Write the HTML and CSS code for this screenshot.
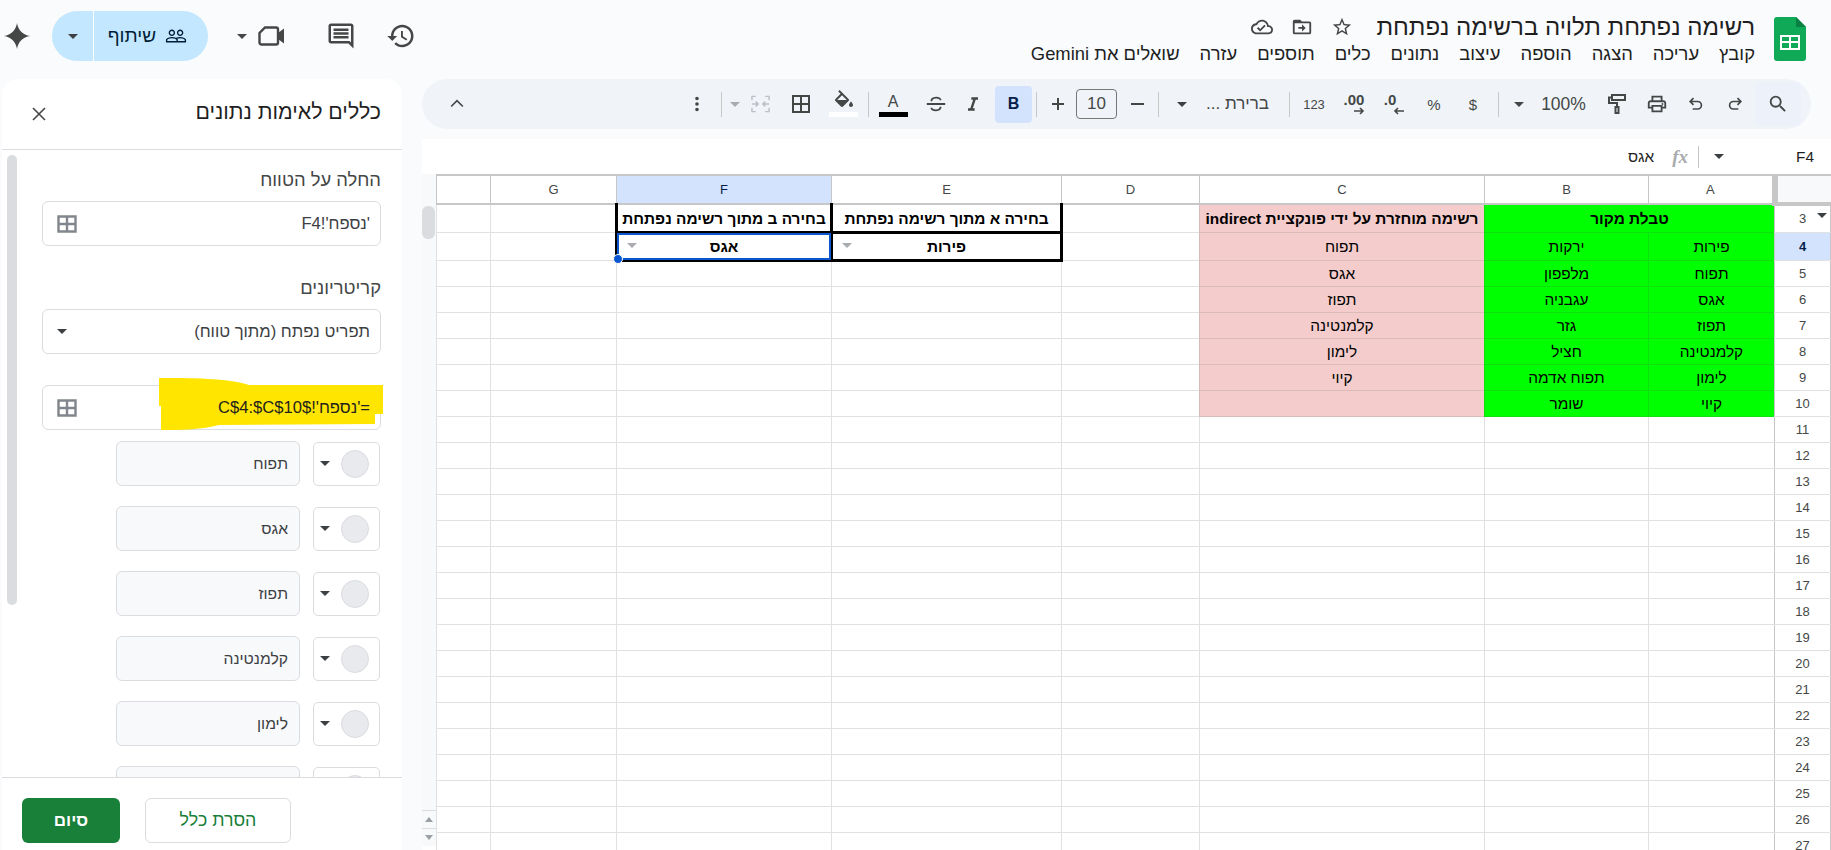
FILE: index.html
```html
<!DOCTYPE html>
<html lang="he" dir="rtl">
<head>
<meta charset="utf-8">
<title>רשימה נפתחת תלויה ברשימה נפתחת</title>
<link rel="stylesheet" href="styles.css">
</head>
<body>
<header class="top">
  <svg class="logo" viewBox="0 0 32 44"><path d="M3 0H22L32 10V41a3 3 0 0 1-3 3H3a3 3 0 0 1-3-3V3a3 3 0 0 1 3-3z" fill="#0fa958"/><path d="M22 0l10 10H22z" fill="#0b8043"/><path d="M6 18h20v15H6z" fill="#fff"/><path d="M8 20h7v4H8zM17 20h7v4h-7zM8 26h7v5H8zM17 26h7v5h-7z" fill="#0fa958"/></svg>
  <div class="doc">
    <div class="doc-title">
      <span class="title-text">רשימה נפתחת תלויה ברשימה נפתחת</span>
      <svg class="ic22 star" viewBox="0 0 24 24"><path d="M22 9.24l-7.19-.62L12 2 9.19 8.63 2 9.24l5.46 4.73L5.82 21 12 17.27 18.18 21l-1.63-7.03L22 9.24zM12 15.4l-3.76 2.27 1-4.28-3.32-2.88 4.38-.38L12 6.1l1.71 4.04 4.38.38-3.32 2.88 1 4.28L12 15.4z"/></svg>
      <svg class="ic22 folder" viewBox="0 0 24 24"><path d="M20 6h-8l-2-2H4c-1.1 0-2 .9-2 2v12c0 1.1.9 2 2 2h16c1.1 0 2-.9 2-2V8c0-1.1-.9-2-2-2zm0 12H4V8h16v10zm-8-1v-3H8v-2h4V9l4 4-4 4z"/></svg>
      <svg class="ic22 cloud" viewBox="0 0 24 24"><path d="M19.35 10.04C18.67 6.59 15.64 4 12 4 9.11 4 6.6 5.64 5.35 8.04 2.34 8.36 0 10.91 0 14c0 3.31 2.69 6 6 6h13c2.76 0 5-2.24 5-5 0-2.64-2.05-4.78-4.65-4.96zM19 18H6c-2.21 0-4-1.79-4-4 0-2.05 1.53-3.76 3.56-3.97l1.07-.11.5-.95C8.08 7.14 9.94 6 12 6c2.62 0 4.88 1.86 5.39 4.43l.3 1.5 1.53.11c1.56.1 2.78 1.41 2.78 2.96 0 1.65-1.35 3-3 3zm-9-1l-3.5-3.5 1.41-1.41L10 14.18l4.6-4.6 1.41 1.41z"/></svg>
    </div>
    <nav class="menu">
      <span>קובץ</span><span>עריכה</span><span>הצגה</span><span>הוספה</span><span>עיצוב</span><span>נתונים</span><span>כלים</span><span>תוספים</span><span>עזרה</span><span>שואלים את Gemini</span>
    </nav>
  </div>
  <div class="actions">
    <svg class="ic28 a-history" viewBox="0 0 24 24"><path d="M13 3c-4.97 0-9 4.03-9 9H1l3.89 3.89.07.14L9 12H6c0-3.87 3.13-7 7-7s7 3.13 7 7-3.13 7-7 7c-1.93 0-3.68-.79-4.94-2.06l-1.42 1.42C8.27 19.99 10.51 21 13 21c4.97 0 9-4.03 9-9s-4.03-9-9-9zm-1 5v5l4.28 2.54.72-1.21-3.5-2.08V8H12z"/></svg>
    <svg class="ic28 a-comment" viewBox="0 0 24 24"><path d="M21.99 4c0-1.1-.89-2-1.99-2H4c-1.1 0-2 .9-2 2v12c0 1.1.9 2 2 2h14l4 4-.01-18zM20 4v13.17L18.83 16H4V4h16zM6 12h12v2H6zm0-3h12v2H6zm0-3h12v2H6z"/></svg>
    <svg class="a-video" viewBox="0 0 27 22"><path d="M7 2.5h11a2 2 0 0 1 2 2v13a2 2 0 0 1-2 2H3.5a2 2 0 0 1-2-2V8z" fill="none" stroke="#444746" stroke-width="2.4"/><path d="M20 8l6-4.5v15L20 14z" fill="#444746"/></svg>
    <span class="caret a-caret"></span>
    <div class="share">
      <div class="share-main">
        <svg class="ic22 people" viewBox="0 0 24 24"><path d="M16.5 13c-1.2 0-3.07.34-4.5 1-1.43-.67-3.3-1-4.5-1C5.33 13 1 14.08 1 16.25V19h22v-2.75c0-2.17-4.33-3.25-6.5-3.25zm-4 4.5h-10v-1.25c0-.54 2.56-1.75 5-1.75s5 1.21 5 1.75v1.25zm9 0H14v-1.25c0-.46-.2-.86-.52-1.22.88-.3 1.96-.53 3.02-.53 2.44 0 5 1.21 5 1.75v1.25zM7.5 12c1.93 0 3.5-1.57 3.5-3.5S9.43 5 7.5 5 4 6.57 4 8.5 5.57 12 7.5 12zm0-5.5c1.1 0 2 .9 2 2s-.9 2-2 2-2-.9-2-2 .9-2 2-2zm9 5.5c1.93 0 3.5-1.57 3.5-3.5S18.43 5 16.5 5 13 6.57 13 8.5s1.57 3.5 3.5 3.5zm0-5.5c1.1 0 2 .9 2 2s-.9 2-2 2-2-.9-2-2 .9-2 2-2z"/></svg>
        <span class="share-text">שיתוף</span>
      </div>
      <div class="share-drop"><span class="caret dark"></span></div>
    </div>
    <svg class="gem" viewBox="0 0 26 26"><path d="M13 0C14 7 19 12 26 13 19 14 14 19 13 26 12 19 7 14 0 13 7 12 12 7 13 0z"/></svg>
  </div>
</header>

<div class="work">
  <main class="main">
    <div class="toolbar">
      <div class="tool w46 hover"><svg class="ic24" viewBox="0 0 24 24"><path d="M15.5 14h-.79l-.28-.27A6.471 6.471 0 0 0 16 9.5 6.5 6.5 0 1 0 9.5 16c1.61 0 3.09-.59 4.23-1.57l.27.28v.79l5 4.99L20.49 19l-4.99-5zm-6 0C7.01 14 5 11.99 5 9.5S7.01 5 9.5 5 14 7.01 14 9.5 11.99 14 9.5 14z"/></svg></div>
      <div class="tool w40"><svg class="st20" viewBox="0 0 24 24"><path d="M15 5l4 4-4 4M19 9H10a4.5 4.5 0 0 0 0 9h6"/></svg></div>
      <div class="tool w38"><svg class="st20" viewBox="0 0 24 24"><path d="M9 5L5 9l4 4M5 9h9a4.5 4.5 0 0 1 0 9H8"/></svg></div>
      <div class="tool w40"><svg class="ic24" viewBox="0 0 24 24"><path d="M19 8h-1V3H6v5H5c-1.66 0-3 1.34-3 3v6h4v4h12v-4h4v-6c0-1.66-1.34-3-3-3zM8 5h8v3H8V5zm8 12v2H8v-4h8v2zm2-2v-2H6v2H4v-4c0-.55.45-1 1-1h14c.55 0 1 .45 1 1v4h-2z"/><circle cx="18" cy="12" r="1"/></svg></div>
      <div class="tool w40"><svg class="st24" viewBox="0 0 24 24"><path d="M7 3h13v5H7zM7 5.5H4V11h8v4M10.5 15h3v6h-3z"/></svg></div>
      <div class="tool w67 txt14b">100%</div>
      <div class="tool w22"><span class="caret"></span></div>
      <div class="tool w20"><span class="sep"></span></div>
      <div class="tool w30 txt14">$</div>
      <div class="tool w48 txt14">%</div>
      <div class="tool w34 dec d1"><span class="dec-num">.0</span><svg class="dec-arrow" viewBox="0 0 12 8"><path d="M11 4H2M5 1L2 4l3 3"/></svg></div>
      <div class="tool w44 dec d2"><span class="dec-num">.00</span><svg class="dec-arrow" viewBox="0 0 12 8"><path d="M1 4h9M7 1l3 3-3 3"/></svg></div>
      <div class="tool w36 txt12">123</div>
      <div class="tool w14"><span class="sep"></span></div>
      <div class="tool w88 font-name"><span>ברירת ...</span></div>
      <div class="tool w24"><span class="caret dark"></span></div>
      <div class="tool w24"><span class="sep"></span></div>
      <div class="tool w18"><span class="minus"></span></div>
      <div class="size-box">10</div>
      <div class="tool w36"><svg class="plus" viewBox="0 0 14 14"><path d="M7 1v12M1 7h12"/></svg></div>
      <div class="tool w8"><span class="sep"></span></div>
      <div class="tool w37 bold-btn">B</div>
      <div class="tool w44"><svg class="ic20" viewBox="0 0 24 24"><path d="M10 4v3h2.21l-3.42 10H6v3h8v-3h-2.21l3.42-10H18V4z"/></svg></div>
      <div class="tool w30 gap13"><svg class="st22" viewBox="0 0 24 24"><path d="M2 12h20M7 9c0-5 10-5 10-1M17 15c0 5-10 5-10 1"/></svg></div>
      <div class="tool w30 colour"><span class="colour-a">A</span><span class="bar black"></span></div>
      <div class="tool w20"><span class="sep"></span></div>
      <div class="tool w30 colour"><svg class="fill-ic" viewBox="0 0 22 18"><path d="M16.56 8.94L7.62 0 6.21 1.41l2.38 2.38-5.15 5.15c-.59.59-.59 1.54 0 2.12l5.5 5.5c.29.29.68.44 1.06.44s.77-.15 1.06-.44l5.5-5.5c.59-.58.59-1.53 0-2.12zM5.21 10L10 5.21 14.79 10H5.21zM19 11.5s-2 2.17-2 3.5c0 1.1.9 2 2 2s2-.9 2-2c0-1.33-2-3.5-2-3.5z"/></svg><span class="bar white"></span></div>
      <div class="tool w54"><svg class="borders" viewBox="0 0 18 18"><path d="M1 1h16v16H1zM9 1v16M1 9h16"/></svg></div>
      <div class="tool w28"><svg class="merge" viewBox="0 0 20 18"><path d="M1 5V1h4M19 5V1h-4M1 13v4h4M19 13v4h-4M1 9h6M5 6.5L7.5 9 5 11.5M19 9h-6M15 6.5L12.5 9l2.500 2.500"/></svg></div>
      <div class="tool w22"><span class="caret light"></span></div>
      <div class="tool w6"><span class="sep"></span></div>
      <div class="tool w42"><svg class="ic24" viewBox="0 0 24 24"><path d="M12 8a2 2 0 1 0 0-4 2 2 0 0 0 0 4zm0 2a2 2 0 1 0 0 4 2 2 0 0 0 0-4zm0 6a2 2 0 1 0 0 4 2 2 0 0 0 0-4z"/></svg></div>
      <div class="tool w40 push-end"><svg class="st20" viewBox="0 0 24 24"><path d="M5 15l7-7 7 7"/></svg></div>
    </div>

    <section class="sheet">
      <div class="formula">
        <span class="cell-ref">F4</span>
        <span class="caret dark fcaret"></span>
        <span class="fsep"></span>
        <span class="fx">fx</span>
        <span class="fvalue">אגס</span>
      </div>
      <div class="grid-wrap">
        <table class="grid">
          <colgroup><col class="c-row"><col class="c-a"><col class="c-b"><col class="c-c"><col class="c-d"><col class="c-e"><col class="c-f"><col class="c-g"><col class="c-h"></colgroup>
          <tr class="r-head"><th class="corner"></th><th>A</th><th>B</th><th>C</th><th>D</th><th>E</th><th class="on">F</th><th>G</th><th></th></tr>
          <tr class="r-28"><th class="rn">3<span class="caret dark freeze"></span></th><td class="g b" colspan="2">טבלת מקור</td><td class="p b">רשימה מוחזרת על ידי פונקציית indirect</td><td></td><td class="k open b">בחירה א מתוך רשימה נפתחת</td><td class="k open b">בחירה ב מתוך רשימה נפתחת</td><td></td><td></td></tr>
          <tr class="r-28"><th class="rn on">4</th><td class="g">פירות</td><td class="g">ירקות</td><td class="p">תפוח</td><td></td><td class="k b cell"><span class="caret light chip"></span>פירות</td><td class="k b cell"><span class="caret light chip"></span>אגס<span class="sel"><i class="handle"></i></span></td><td></td><td></td></tr>
          <tr><th class="rn">5</th><td class="g">תפוח</td><td class="g">מלפפון</td><td class="p">אגס</td><td></td><td></td><td></td><td></td><td></td></tr>
          <tr><th class="rn">6</th><td class="g">אגס</td><td class="g">עגבניה</td><td class="p">תפוז</td><td></td><td></td><td></td><td></td><td></td></tr>
          <tr><th class="rn">7</th><td class="g">תפוז</td><td class="g">גזר</td><td class="p">קלמנטינה</td><td></td><td></td><td></td><td></td><td></td></tr>
          <tr><th class="rn">8</th><td class="g">קלמנטינה</td><td class="g">חציל</td><td class="p">לימון</td><td></td><td></td><td></td><td></td><td></td></tr>
          <tr><th class="rn">9</th><td class="g">לימון</td><td class="g">תפוח אדמה</td><td class="p">קיוי</td><td></td><td></td><td></td><td></td><td></td></tr>
          <tr><th class="rn">10</th><td class="g">קיוי</td><td class="g">שומר</td><td class="p"></td><td></td><td></td><td></td><td></td><td></td></tr>
          <tr><th class="rn">11</th><td></td><td></td><td></td><td></td><td></td><td></td><td></td><td></td></tr>
          <tr><th class="rn">12</th><td></td><td></td><td></td><td></td><td></td><td></td><td></td><td></td></tr>
          <tr><th class="rn">13</th><td></td><td></td><td></td><td></td><td></td><td></td><td></td><td></td></tr>
          <tr><th class="rn">14</th><td></td><td></td><td></td><td></td><td></td><td></td><td></td><td></td></tr>
          <tr><th class="rn">15</th><td></td><td></td><td></td><td></td><td></td><td></td><td></td><td></td></tr>
          <tr><th class="rn">16</th><td></td><td></td><td></td><td></td><td></td><td></td><td></td><td></td></tr>
          <tr><th class="rn">17</th><td></td><td></td><td></td><td></td><td></td><td></td><td></td><td></td></tr>
          <tr><th class="rn">18</th><td></td><td></td><td></td><td></td><td></td><td></td><td></td><td></td></tr>
          <tr><th class="rn">19</th><td></td><td></td><td></td><td></td><td></td><td></td><td></td><td></td></tr>
          <tr><th class="rn">20</th><td></td><td></td><td></td><td></td><td></td><td></td><td></td><td></td></tr>
          <tr><th class="rn">21</th><td></td><td></td><td></td><td></td><td></td><td></td><td></td><td></td></tr>
          <tr><th class="rn">22</th><td></td><td></td><td></td><td></td><td></td><td></td><td></td><td></td></tr>
          <tr><th class="rn">23</th><td></td><td></td><td></td><td></td><td></td><td></td><td></td><td></td></tr>
          <tr><th class="rn">24</th><td></td><td></td><td></td><td></td><td></td><td></td><td></td><td></td></tr>
          <tr><th class="rn">25</th><td></td><td></td><td></td><td></td><td></td><td></td><td></td><td></td></tr>
          <tr><th class="rn">26</th><td></td><td></td><td></td><td></td><td></td><td></td><td></td><td></td></tr>
          <tr><th class="rn">27</th><td></td><td></td><td></td><td></td><td></td><td></td><td></td><td></td></tr>
        </table>
        <div class="vscroll">
          <div class="vtrack"><div class="vthumb"></div></div>
          <div class="varrow"><span class="up"></span></div>
          <div class="varrow"><span class="down"></span></div>
        </div>
      </div>
    </section>
  </main>

  <aside class="panel">
    <div class="panel-head">
      <h2 class="panel-title">כללים לאימות נתונים</h2>
      <svg class="close" viewBox="0 0 14 14"><path d="M1 1l12 12M13 1L1 13"/></svg>
    </div>
    <div class="panel-body">
      <div class="pscroll"></div>
      <div class="label first">החלה על הטווח</div>
      <div class="box"><span class="val">'נספח'!F4</span><svg class="gridic" viewBox="0 0 20 18"><path d="M1.500 1.500h17v15h-17zM10 1.500v15M1.500 9h17"/></svg></div>
      <div class="label">קריטריונים</div>
      <div class="box"><span class="val">תפריט נפתח (מתוך טווח)</span><span class="caret dark bcaret"></span></div>
      <div class="box formula-box">
        <svg class="marker" viewBox="0 0 224 52"><path d="M0 0C30 0 70 0 90 7L224 7V36H216V46L60 47C40 52 20 52 2 52V28H0z"/></svg>
        <span class="val on-marker">='נספח'!$C$4:$C$10</span><svg class="gridic" viewBox="0 0 20 18"><path d="M1.500 1.500h17v15h-17zM10 1.500v15M1.500 9h17"/></svg>
      </div>
      <div class="opt"><div class="swatch"><i class="dot"></i><span class="caret dark"></span></div><div class="optval">תפוח</div></div>
      <div class="opt"><div class="swatch"><i class="dot"></i><span class="caret dark"></span></div><div class="optval">אגס</div></div>
      <div class="opt"><div class="swatch"><i class="dot"></i><span class="caret dark"></span></div><div class="optval">תפוז</div></div>
      <div class="opt"><div class="swatch"><i class="dot"></i><span class="caret dark"></span></div><div class="optval">קלמנטינה</div></div>
      <div class="opt"><div class="swatch"><i class="dot"></i><span class="caret dark"></span></div><div class="optval">לימון</div></div>
      <div class="opt"><div class="swatch"><i class="dot"></i><span class="caret dark"></span></div><div class="optval">קיוי</div></div>
    </div>
    <div class="panel-foot">
      <button class="btn btn-out">הסרת כלל</button>
      <button class="btn btn-done">סיום</button>
    </div>
  </aside>
</div>
</body>
</html>
```
FILE: styles.css
```css
* { box-sizing: border-box; }
html, body { margin: 0; height: 850px; overflow: hidden; }
body { background: #f9fbfd; font-family: "Liberation Sans", Arial, sans-serif; color: #1f1f1f; direction: rtl; display: flex; flex-direction: column; }

/* shared bits */
.caret { display: inline-block; width: 0; height: 0; border-left: 5px solid transparent; border-right: 5px solid transparent; border-top: 5px solid #444746; flex: none; }
.caret.dark { border-top-color: #3c4043; }
.caret.light { border-top-color: #a8abaf; }
svg { display: block; flex: none; fill: #444746; }
.ic20 { width: 20px; height: 20px; }
.ic22 { width: 22px; height: 22px; }
.ic24 { width: 22px; height: 22px; }
.ic28 { width: 30px; height: 30px; }
.st20, .st22, .st24 { fill: none; stroke: #444746; stroke-width: 2; }
.st20 { width: 20px; height: 20px; }
.st22 { width: 22px; height: 22px; }
.st24 { width: 24px; height: 24px; }

/* top bar */
.top { height: 79px; flex: none; display: flex; align-items: flex-start; padding: 17px 25px 0 4px; }
.logo { width: 32px; height: 44px; flex: none; }
.doc { margin-right: 19px; display: flex; flex-direction: column; }
.doc-title { display: flex; align-items: center; height: 24px; margin-top: -2px; }
.title-text { font-size: 24px; line-height: 24px; color: #1f1f1f; white-space: nowrap; }
.star { margin-right: 23px; }
.folder { margin-right: 18px; }
.cloud { margin-right: 18px; }
.menu { display: flex; gap: 20px; margin-top: 4px; font-size: 18.4px; line-height: 22px; color: #1f1f1f; white-space: nowrap; }
.actions { margin-right: auto; display: flex; align-items: center; height: 50px; margin-top: -6px; }
.a-history { margin-left: 0; }
.a-comment { margin-right: 30px; }
.a-video { width: 27px; height: 22px; margin-right: 41px; }
.a-caret { margin-right: 11px; }
.share { width: 156px; height: 50px; margin-right: 29px; background: #c2e7ff; border-radius: 25px; display: flex; }
.share-main { flex: 1; display: flex; align-items: center; gap: 9px; padding-right: 21px; }
.people { fill: #001d35; }
.share-text { font-size: 19px; color: #001d35; white-space: nowrap; }
.share-drop { width: 42px; border-right: 1px solid #fff; display: flex; align-items: center; justify-content: center; flex: none; }
.gem { width: 26px; height: 26px; margin-right: 22px; }

/* main area */
.work { flex: 1; min-height: 0; display: flex; padding-left: 2px; }
.main { flex: 1; min-width: 0; display: flex; flex-direction: column; }
.toolbar { height: 50px; flex: none; margin-right: 20px; background: #f0f4f9; border-radius: 25px; display: flex; align-items: center; padding: 0 10px 0 15px; }
.tool { height: 37px; display: flex; align-items: center; justify-content: center; flex: none; color: #444746; white-space: nowrap; }
.hover { background: #edf2fa; height: 44px; border-radius: 4px; }
.w6 { width: 6px; } .w8 { width: 8px; } .w14 { width: 14px; } .w18 { width: 18px; } .w20 { width: 20px; } .w22 { width: 22px; } .w24 { width: 24px; } .w28 { width: 28px; }
.w30 { width: 30px; } .w34 { width: 34px; } .w36 { width: 36px; } .w37 { width: 37px; } .w38 { width: 38px; } .w40 { width: 40px; } .w42 { width: 42px; } .w44 { width: 44px; }
.w46 { width: 46px; } .w48 { width: 48px; } .w54 { width: 54px; } .w67 { width: 67px; } .w88 { width: 88px; }
.gap13 { margin-left: 13px; }
.push-end { margin-right: auto; }
.sep { display: block; width: 1px; height: 25px; background: #c7c7c7; }
.txt14 { font-size: 15px; }
.txt14b { font-size: 17.5px; }
.txt12 { font-size: 13px; }
.dec { flex-direction: column; gap: 0; justify-content: center; }
.dec-num { font-size: 15px; font-weight: bold; line-height: 13px; direction: ltr; }
.dec-arrow { width: 12px; height: 8px; fill: none; stroke: #444746; stroke-width: 1.600; margin-top: 1px; }
.d1 .dec-num { margin-right: 6px; }
.d1 .dec-arrow { margin-left: 12px; }
.d2 .dec-arrow { margin-left: 9px; }
.font-name { justify-content: flex-start; padding-right: 13px; font-size: 17px; }
.minus { display: block; width: 13px; height: 2px; background: #444746; }
.size-box { width: 41px; height: 30px; margin-right: 11px; flex: none; border: 1px solid #747775; border-radius: 4px; display: flex; align-items: center; justify-content: center; font-size: 17px; color: #444746; }
.plus { width: 14px; height: 14px; fill: none; stroke: #444746; stroke-width: 2; }
.bold-btn { background: #d3e3fd; border-radius: 4px; font-weight: bold; font-size: 16px; color: #041e49; }
.colour { flex-direction: column; justify-content: flex-end; height: 38px; padding-bottom: 6px; }
.colour-a { font-size: 16px; line-height: 18px; margin-bottom: 1px; }
.fill-ic { width: 22px; height: 18px; margin-bottom: 4px; }
.bar { display: block; width: 29px; height: 5px; }
.bar.black { background: #000; }
.bar.white { background: #fff; }
.borders { width: 18px; height: 18px; fill: none; stroke: #444746; stroke-width: 2; }
.merge { width: 19px; height: 18px; fill: none; stroke: #bcbfc4; stroke-width: 1.500; }

/* sheet */
.sheet { flex: 1; min-height: 0; margin-top: 10px; background: #fff; display: flex; flex-direction: column; overflow: hidden; }
.formula { height: 35px; flex: none; display: flex; align-items: center; font-size: 15.4px; color: #1f1f1f; }
.cell-ref { width: 52px; text-align: center; margin-right: 0; }
.fcaret { margin-right: 55px; }
.fsep { width: 1px; height: 22px; background: #c7c7c7; margin-right: 15px; }
.fx { font-family: "Liberation Serif", serif; font-style: italic; font-weight: bold; font-size: 19px; color: #a9abad; margin-right: 10px; }
.fvalue { margin-right: 18px; }
.grid-wrap { flex: 1; min-height: 0; display: flex; }
.grid { width: 1394px; flex: none; table-layout: fixed; border-collapse: collapse; font-size: 15.4px; color: #000; align-self: flex-start; }
.c-row { width: 56px; } .c-a { width: 126px; } .c-b { width: 164px; } .c-c { width: 285px; } .c-d { width: 138px; } .c-e { width: 230px; } .c-f { width: 215px; } .c-g { width: 126px; } .c-h { width: 54px; }
.grid tr { height: 26px; }
.grid .r-head { height: 29px; }
.grid .r-28 { height: 28px; }
.grid td, .grid th { padding: 0 1px; border: 1px solid #e1e1e1; text-align: center; white-space: nowrap; overflow: hidden; font-weight: normal; height: inherit; }
.grid td { padding-top: 2px; }
.r-head th { border-color: #c7c7c7; border-top: 2px solid #c7c7c7; border-bottom: 2px solid #c7c7c7; font-size: 13px; color: #444746; }
.grid .corner { background: #f8f9fa; border-right: 0; border-left: 6px solid #c7c7c7; border-bottom: 4px solid #c7c7c7; }
.grid .rn { font-size: 13px; color: #444746; border-color: #c7c7c7; border-top-color: #e1e1e1; border-bottom-color: #e1e1e1; position: relative; overflow: visible; }
.freeze { position: absolute; right: 3px; top: 7px; }
.grid th.on { background: #d3e3fd; font-weight: bold; color: #041e49; }
.r-head th.on { font-weight: normal; }
.grid td.g { background: #0f0; border-color: #10e010; }
.grid td.p { background: #f4cccc; border-color: #dcbaba; }
.grid td.b { font-weight: bold; }
.grid td.k { border: 3px solid #000; overflow: hidden; }
.grid td.open { border-top: 1px solid #c7c7c7; }
.cell { position: relative; }
.grid td.cell { overflow: visible; }
.chip { position: absolute; left: 9px; top: 9px; }
.sel { position: absolute; inset: -1px; border: 2px solid #0b57d0; }
.handle { position: absolute; left: -6px; bottom: -6px; width: 10px; height: 10px; border-radius: 50%; background: #0b57d0; border: 1px solid #fff; }
.vscroll { width: 15px; flex: none; display: flex; flex-direction: column; background: #fff; }
.vtrack { height: 636px; padding: 32px 1px 0; background: #f8f9fa; }
.vthumb { height: 33px; background: #dadce0; border-radius: 6px; }
.varrow { height: 18px; border-top: 1px solid #dadce0; display: flex; align-items: center; justify-content: center; background: #f8f9fa; }
.varrow .up { border-left: 4px solid transparent; border-right: 4px solid transparent; border-bottom: 5px solid #9aa0a6; }
.varrow .down { border-left: 4px solid transparent; border-right: 4px solid transparent; border-top: 5px solid #9aa0a6; }

/* side panel */
.panel { width: 400px; flex: none; margin-right: 20px; background: #fff; border-radius: 16px 16px 0 0; display: flex; flex-direction: column; overflow: hidden; }
.panel-head { height: 71px; flex: none; border-bottom: 1px solid #dadce0; display: flex; align-items: center; justify-content: space-between; padding: 0 21px 0 30px; }
.panel-title { margin: 0; font-size: 21.3px; font-weight: normal; color: #1f1f1f; margin-top: -4px; }
.close { width: 14px; height: 14px; fill: none; stroke: #444746; stroke-width: 1.600; }
.panel-body { flex: 1; min-height: 0; overflow: hidden; padding: 0 21px 0 40px; position: relative; }
.pscroll { position: absolute; left: 5px; top: 5px; width: 10px; height: 450px; background: #dadce0; border-radius: 5px; }
.label { font-size: 18.4px; line-height: 22px; color: #444746; margin-top: 30px; margin-bottom: 10px; }
.label.first { margin-top: 19px; }
.box { height: 45px; border: 1px solid #dadce0; border-radius: 6px; display: flex; align-items: center; justify-content: space-between; padding: 0 10px 0 14px; font-size: 16.6px; color: #3c4043; margin-bottom: 31px; position: relative; }
.formula-box { margin-bottom: 11px; }
.marker { position: absolute; left: 116px; top: -8px; width: 224px; height: 52px; fill: #ffe500; }
.val { position: relative; }
.on-marker { color: #1f1f1f; }
.gridic { width: 20px; height: 18px; fill: none; stroke: #80868b; stroke-width: 2.400; position: relative; }
.opt { display: flex; align-items: center; height: 45px; margin-bottom: 20px; padding-right: 1px; gap: 13px; }
.swatch { width: 67px; height: 44px; border: 1px solid #dadce0; border-radius: 5px; display: flex; align-items: center; gap: 11px; padding-right: 10px; background: #fff; }
.dot { width: 28px; height: 28px; border-radius: 50%; background: #e8eaed; border: 1px solid #dadce0; flex: none; }
.optval { width: 184px; height: 45px; border: 1px solid #dadce0; border-radius: 6px; background: #f8f9fa; display: flex; align-items: center; padding-right: 11px; font-size: 15.7px; color: #3c4043; }
.panel-foot { height: 73px; flex: none; border-top: 1px solid #dadce0; background: #fff; display: flex; align-items: flex-start; padding: 20px 111px 0 0; gap: 25px; }
.btn { height: 45px; border-radius: 6px; font: inherit; font-size: 17.8px; }
.btn-out { width: 146px; background: #fff; border: 1px solid #dadce0; color: #188038; }
.btn-done { width: 98px; background: #188038; border: 0; color: #fff; font-size: 17px; font-weight: bold; }
```
